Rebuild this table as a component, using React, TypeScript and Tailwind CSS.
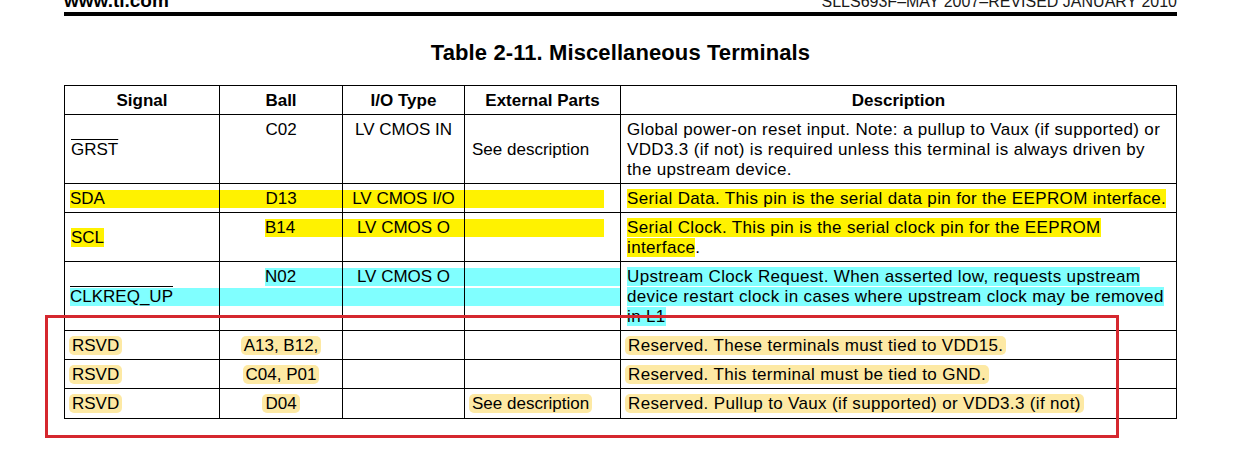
import type { ReactNode } from "react";

const YELLOW = "bg-[#fff200]";
const CYAN = "bg-[#80ffff]";

// full-height row band (the highlight strip drawn by the PDF viewer)
function Band({ color, className = "", children }: { color: string; className?: string; children?: ReactNode }) {
  return (
    <div className={`h-5 py-px bg-clip-content leading-[18px] whitespace-nowrap ${color} ${className}`}>
      {children}
    </div>
  );
}

function Mark({ color, children }: { color: string; children: ReactNode }) {
  return <span className={color}>{children}</span>;
}

function Soft({ children }: { children: ReactNode }) {
  return <span className="-mx-[3px] rounded-[5px] bg-[#fde9a4] px-[3px]">{children}</span>;
}

function Cell({ className = "", children }: { className?: string; children?: ReactNode }) {
  return <div className={`border-r border-b border-black pt-[5px] pb-[3px] ${className}`}>{children}</div>;
}

export default function App() {
  return (
    <div className="relative flow-root h-[455px] w-[1236px] bg-white font-['Liberation_Sans',Arial,sans-serif] text-black">
      <div className="-mt-[9px] ml-[64px] w-[1113px]">
        <div className="flex items-baseline justify-between leading-[20px]">
          <span className="text-[19px] font-bold">www.ti.com</span>
          <span className="text-[16px] text-[#1a1a1a]">SLLS693F–MAY 2007–REVISED JANUARY 2010</span>
        </div>
        <div className="h-[4px] bg-black" />
      </div>

      <h1 className="mt-[24px] ml-[64px] w-[1113px] text-center text-[22px] font-bold leading-[26px] tracking-[0.1px]">
        Table 2-11. Miscellaneous Terminals
      </h1>

      <div className="mt-[19px] ml-[64px] grid w-[1113px] grid-cols-[155px_123px_122px_156px_556px] border-t border-l border-black text-[17px] leading-[20px]">
        {/* header */}
        <Cell className="text-center font-bold">Signal</Cell>
        <Cell className="text-center font-bold">Ball</Cell>
        <Cell className="text-center font-bold">I/O Type</Cell>
        <Cell className="text-center font-bold">External Parts</Cell>
        <Cell className="text-center font-bold">Description</Cell>

        {/* GRST */}
        <Cell className="flex flex-col justify-center pl-[6px]">
          <span className="overline">GRST</span>
        </Cell>
        <Cell className="text-center">C02</Cell>
        <Cell className="text-center">LV CMOS IN</Cell>
        <Cell className="flex flex-col justify-center pl-[7px]">See description</Cell>
        <Cell className="pl-[6px] tracking-[0.35px] whitespace-nowrap">
          <div>Global power-on reset input. Note: a pullup to Vaux (if supported) or</div>
          <div>VDD3.3 (if not) is required unless this terminal is always driven by</div>
          <div>the upstream device.</div>
        </Cell>

        {/* SDA */}
        <Cell className="pl-[5px]">
          <Band color={YELLOW}>SDA</Band>
        </Cell>
        <Cell>
          <Band color={YELLOW} className="text-center">D13</Band>
        </Cell>
        <Cell>
          <Band color={YELLOW} className="text-center">LV CMOS I/O</Band>
        </Cell>
        <Cell>
          <Band color={YELLOW} className="mr-[16px]" />
        </Cell>
        <Cell className="pl-[6px] tracking-[0.35px] whitespace-nowrap">
          <Mark color={YELLOW}>Serial Data. This pin is the serial data pin for the EEPROM interface.</Mark>
        </Cell>

        {/* SCL */}
        <Cell className="flex flex-col justify-center pl-[6px]">
          <div>
            <Mark color={YELLOW}>SCL</Mark>
          </div>
        </Cell>
        <Cell className="pl-[45px]">
          <Band color={YELLOW}>B14</Band>
        </Cell>
        <Cell>
          <Band color={YELLOW} className="text-center">LV CMOS O</Band>
        </Cell>
        <Cell>
          <Band color={YELLOW} className="mr-[16px]" />
        </Cell>
        <Cell className="pl-[6px] tracking-[0.35px] whitespace-nowrap">
          <div>
            <Mark color={YELLOW}>Serial Clock. This pin is the serial clock pin for the EEPROM</Mark>
          </div>
          <div>
            <Mark color={YELLOW}>interface</Mark>.
          </div>
        </Cell>

        {/* CLKREQ_UP */}
        <Cell className="flex flex-col justify-center pl-[5px]">
          <Band color={CYAN}>
            <span className="overline">CLKREQ_UP</span>
          </Band>
        </Cell>
        <Cell className="pl-[43px]">
          <Band color={CYAN} className="pl-[2px]">N02</Band>
          <Band color={CYAN} className="-ml-[43px]" />
        </Cell>
        <Cell>
          <Band color={CYAN} className="text-center">LV CMOS O</Band>
          <Band color={CYAN} />
        </Cell>
        <Cell>
          <Band color={CYAN} />
          <Band color={CYAN} />
        </Cell>
        <Cell className="pl-[6px] tracking-[0.35px] whitespace-nowrap">
          <div>
            <Mark color={CYAN}>Upstream Clock Request. When asserted low, requests upstream</Mark>
          </div>
          <div>
            <Mark color={CYAN}>device restart clock in cases where upstream clock may be removed</Mark>
          </div>
          <div>
            <Mark color={CYAN}>in L1</Mark>
          </div>
        </Cell>

        {/* RSVD rows */}
        <Cell className="pl-[7px]">
          <Soft>RSVD</Soft>
        </Cell>
        <Cell className="text-center">
          <Soft>A13, B12,</Soft>
        </Cell>
        <Cell />
        <Cell />
        <Cell className="pl-[7px] tracking-[0.35px] whitespace-nowrap">
          <Soft>Reserved. These terminals must tied to VDD15.</Soft>
        </Cell>

        <Cell className="pl-[7px]">
          <Soft>RSVD</Soft>
        </Cell>
        <Cell className="text-center">
          <Soft>C04, P01</Soft>
        </Cell>
        <Cell />
        <Cell />
        <Cell className="pl-[7px] tracking-[0.35px] whitespace-nowrap">
          <Soft>Reserved. This terminal must be tied to GND.</Soft>
        </Cell>

        <Cell className="pl-[7px] pb-[4px]">
          <Soft>RSVD</Soft>
        </Cell>
        <Cell className="text-center">
          <Soft>D04</Soft>
        </Cell>
        <Cell />
        <Cell className="pl-[7px]">
          <Soft>See description</Soft>
        </Cell>
        <Cell className="pl-[7px] tracking-[0.35px] whitespace-nowrap">
          <Soft>Reserved. Pullup to Vaux (if supported) or VDD3.3 (if not)</Soft>
        </Cell>
      </div>

      {/* red annotation box drawn over the table */}
      <div className="absolute top-[315px] left-[45px] h-[123px] w-[1074px] border-[3px] border-[#d5282f]" />
    </div>
  );
}
